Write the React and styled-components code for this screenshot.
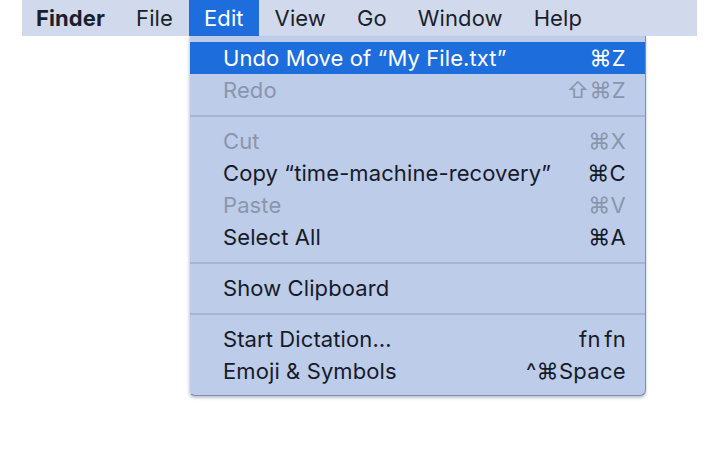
import React from "react";
import styled, { createGlobalStyle } from "styled-components";

const Global = createGlobalStyle`
  html, body { margin: 0; padding: 0; background: #ffffff; }
  body { font-family: Inter, "Noto Sans", "DejaVu Sans", sans-serif; }
`;

const Page = styled.div`
  width: 720px;
  height: 450px;
  padding-left: 22px;
  box-sizing: border-box;
`;

const MenuBar = styled.nav`
  display: flex;
  align-items: stretch;
  width: 675px;
  height: 36px;
  background: #d1daec;
`;

const BarItem = styled.div`
  position: relative;
  display: flex;
  align-items: center;
  padding: 0 15px 0 ${(p) => (p.$first ? "14px" : "15px")};
  margin-right: 1px;
  font-size: 22px;
  font-weight: ${(p) => (p.$bold ? 700 : 400)};
  color: ${(p) => (p.$active ? "#ffffff" : "#1b1f2b")};
  background: ${(p) => (p.$active ? "#1d6ddc" : "transparent")};
  letter-spacing: 0.1px;
`;

const Dropdown = styled.div`
  position: absolute;
  top: 100%;
  left: 0;
  width: 457px;
  box-sizing: border-box;
  padding: 6px 0 8px;
  background: #bdcce8;
  border-left: 1px solid #d3ddf0;
  border-right: 1px solid #7f8fb3;
  border-bottom: 1px solid #7f8fb3;
  border-radius: 0 0 6px 6px;
  box-shadow: 0 2px 3px rgba(40, 50, 90, 0.3);
  z-index: 2;
`;

const Row = styled.div`
  display: flex;
  align-items: center;
  justify-content: space-between;
  height: 32px;
  padding: 0 19px 0 33px;
  font-size: 22px;
  font-weight: 400;
  color: ${(p) =>
    p.$selected ? "#ffffff" : p.$disabled ? "#8a96ad" : "#161b2a"};
  background: ${(p) => (p.$selected ? "#1d6ddc" : "transparent")};
  letter-spacing: 0.1px;
  white-space: nowrap;
`;

const Shortcut = styled.span`
  font-family: Inter, "DejaVu Sans", sans-serif;
  letter-spacing: 0.3px;
  word-spacing: -3px;
`;

const Separator = styled.div`
  height: 19px;
  display: flex;
  align-items: center;
  &::after {
    content: "";
    display: block;
    width: 100%;
    height: 2px;
    background: #a7b5d3;
  }
`;

const items = [
  { label: "Undo Move of \u201CMy File.txt\u201D", key: "\u2318Z", selected: true },
  { label: "Redo", key: "\u21E7\u2318Z", disabled: true },
  { sep: true },
  { label: "Cut", key: "\u2318X", disabled: true },
  { label: "Copy \u201Ctime-machine-recovery\u201D", key: "\u2318C" },
  { label: "Paste", key: "\u2318V", disabled: true },
  { label: "Select All", key: "\u2318A" },
  { sep: true },
  { label: "Show Clipboard", key: "" },
  { sep: true },
  { label: "Start Dictation\u2026", key: "fn fn" },
  { label: "Emoji & Symbols", key: "^\u2318Space" },
];

export default function App() {
  return (
    <>
      <Global />
      <Page>
        <MenuBar>
          <BarItem $first $bold>Finder</BarItem>
          <BarItem>File</BarItem>
          <BarItem $active>
            Edit
            <Dropdown>
              {items.map((it, i) =>
                it.sep ? (
                  <Separator key={i} />
                ) : (
                  <Row key={i} $selected={it.selected} $disabled={it.disabled}>
                    <span>{it.label}</span>
                    <Shortcut>{it.key}</Shortcut>
                  </Row>
                )
              )}
            </Dropdown>
          </BarItem>
          <BarItem>View</BarItem>
          <BarItem>Go</BarItem>
          <BarItem>Window</BarItem>
          <BarItem>Help</BarItem>
        </MenuBar>
      </Page>
    </>
  );
}
